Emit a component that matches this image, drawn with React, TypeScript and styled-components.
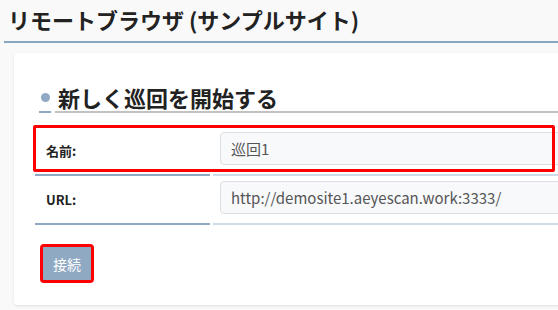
import React from "react";
import styled, { createGlobalStyle } from "styled-components";

const GlobalStyle = createGlobalStyle`
    html, body {
        margin: 0;
        padding: 0;
        overflow: hidden;
        background: #f9f9f9;
        font-family: "Noto Sans CJK JP", "Noto Sans", sans-serif;
        color: #222;
    }
`;

const Page = styled.div`
    width: 640px;
    padding-bottom: 20px;
`;

const Header = styled.header`
    margin: 0 0 0 4px;
    padding: 4px 4px 6px;
    border-bottom: 2px solid #87a6c2;
`;

const Title = styled.h1`
    margin: 0;
    font-size: 22px;
    line-height: 31px;
    font-weight: 700;
    color: #222;
`;

const Card = styled.section`
    margin: 10px 0 0 14px;
    padding: 30px 0 25px 21px;
    background: #fff;
    border-radius: 3px;
    box-shadow: 0 1px 3px rgba(0, 0, 0, 0.1);
`;

const Heading = styled.h2`
    //見出し
    display: flex;
    gap: 4px;
    margin: 0 0 14px 4px;
    font-size: 22px;
    line-height: 28px;
    font-weight: 700;
    color: #222;
`;

const DotCell = styled.span`
    display: flex;
    align-items: center;
    justify-content: center;
    width: 12px;
    border-bottom: 2px solid #8fa9c3;
`;

const Dot = styled.span`
    width: 9px;
    height: 9px;
    border-radius: 50%;
    background: #8fa9c3;
`;

const HeadingText = styled.span`
    flex: 1;
    padding-left: 3px;
    border-bottom: 2px solid #c2c2c2;
`;

const Form = styled.div`
    display: flex;
    flex-direction: column;
`;

const Row = styled.div`
    position: relative;
    display: grid;
    grid-template-columns: 175px 1fr;
    column-gap: 3px;
`;

const Highlight = styled.span`
    //赤い枠
    position: absolute;
    top: -2px;
    left: -2px;
    width: 516px;
    height: 41px;
    border: 3px solid #ff0000;
    border-radius: 2px;
    pointer-events: none;
`;

const Label = styled.div`
    display: flex;
    align-items: center;
    padding-left: 11px;
    font-size: 13px;
    font-weight: 700;
    color: #222;
    border-bottom: 2px solid #8fa9c3;
`;

const Value = styled.div`
    padding: 5px 0 9px 7px;
    border-bottom: 2px solid #cfdce8;
`;

const Input = styled.input`
    box-sizing: border-box;
    display: block;
    width: 100%;
    height: 33px;
    padding: 0 10px;
    font-family: "Noto Sans CJK JP", "Noto Sans", sans-serif;
    font-size: 15px;
    color: #555;
    background: #f8f9fb;
    border: 1px solid #dcdfe3;
    border-radius: 4px;
    outline: none;
`;

const Button = styled.button<{ $highlighted?: boolean }>`
    align-self: flex-start;
    margin: 22px 0 0 8px;
    width: 48px;
    height: 33px;
    padding: 0;
    font-family: "Noto Sans CJK JP", "Noto Sans", sans-serif;
    font-size: 14px;
    color: #fff;
    background: #8fa9c3;
    border: none;
    border-radius: 1px;
    outline: ${(p) => (p.$highlighted ? "3px solid #ff0000" : "none")};
`;

export default function App() {
    return (
        <>
            <GlobalStyle />
            <Page>
                <Header>
                    <Title>リモートブラウザ (サンプルサイト)</Title>
                </Header>
                <Card>
                    <Heading>
                        <DotCell>
                            <Dot />
                        </DotCell>
                        <HeadingText>新しく巡回を開始する</HeadingText>
                    </Heading>
                    <Form>
                        <Row>
                            <Label>名前:</Label>
                            <Value>
                                <Input defaultValue="巡回1" />
                            </Value>
                            <Highlight />
                        </Row>
                        <Row>
                            <Label>URL:</Label>
                            <Value>
                                <Input defaultValue="http://demosite1.aeyescan.work:3333/" />
                            </Value>
                        </Row>
                        <Button $highlighted>接続</Button>
                    </Form>
                </Card>
            </Page>
        </>
    );
}
